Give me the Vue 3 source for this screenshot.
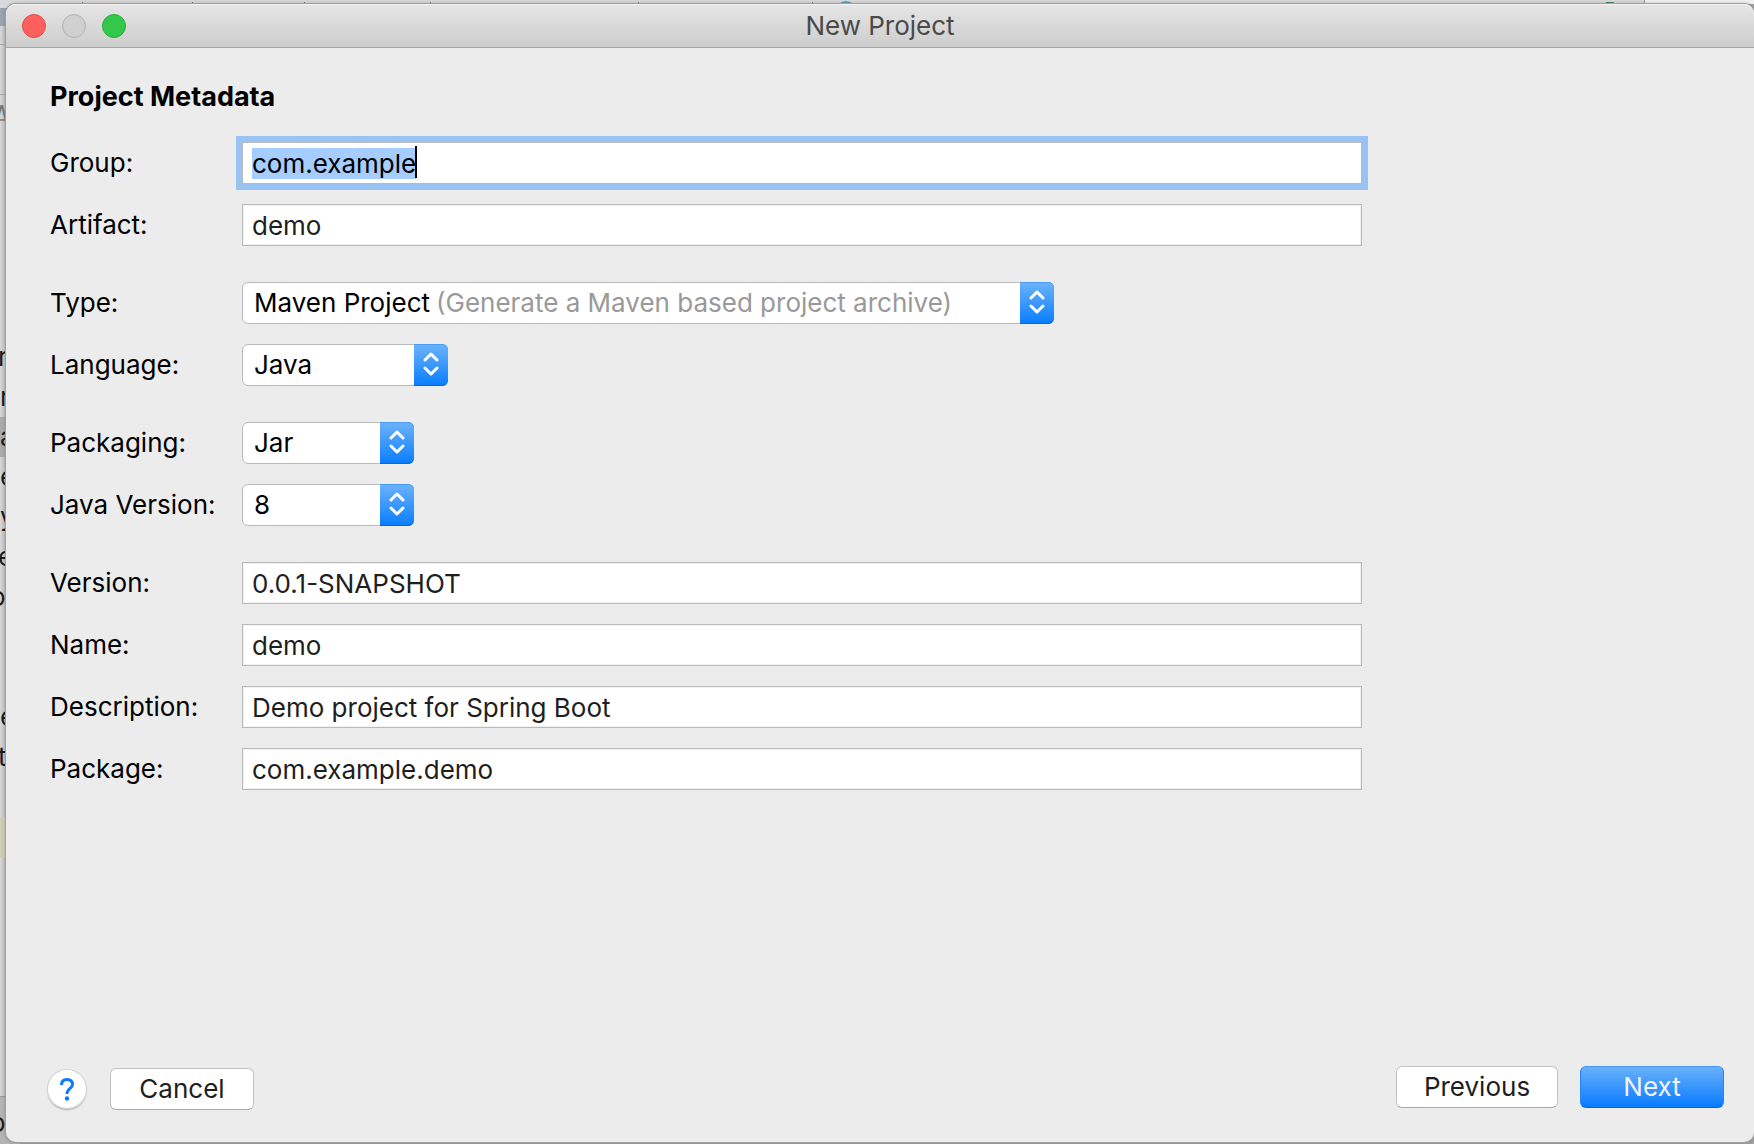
<script setup>
import { onMounted, reactive, ref } from 'vue'

const form = reactive({
  group: 'com.example',
  artifact: 'demo',
  type: 'Maven Project',
  language: 'Java',
  packaging: 'Jar',
  javaVersion: '8',
  version: '0.0.1-SNAPSHOT',
  name: 'demo',
  description: 'Demo project for Spring Boot',
  package: 'com.example.demo',
})

const sections = [
  [
    { key: 'group', label: 'Group:' },
    { key: 'artifact', label: 'Artifact:' },
  ],
  [
    { key: 'type', label: 'Type:', size: 'wide', hint: '(Generate a Maven based project archive)' },
    { key: 'language', label: 'Language:', size: 'medium' },
  ],
  [
    { key: 'packaging', label: 'Packaging:', size: 'small' },
    { key: 'javaVersion', label: 'Java Version:', size: 'small' },
  ],
  [
    { key: 'version', label: 'Version:' },
    { key: 'name', label: 'Name:' },
    { key: 'description', label: 'Description:' },
    { key: 'package', label: 'Package:' },
  ],
]

// Editor lines that show at the left edge of the dialog
const editorLines = ['r', 'r', 'a', 'e', 'y', 'e', 'o', '', '', 'e', 't', '', '']

const page = ref(null)
onMounted(() => {
  const first = page.value.querySelector('#group')
  first.focus()
  first.select()
})
</script>

<template>
  <div ref="page" class="desktop">
    <div class="editor" aria-hidden="true">
      <svg class="tabs" width="1754" height="4" viewBox="0 0 1754 4">
        <rect width="1754" height="4" fill="#dadada" />
        <path d="M82 2l2 2M192 2l2 2M304 2l2 2M430 2l2 2M638 2l2 2M812 2l2 2" stroke="#777" />
        <circle cx="846" cy="11" r="10" fill="#5ea3bd" />
        <rect x="1606" y="2" width="8" height="2" fill="#4a9160" />
        <rect x="1644" width="1" height="4" fill="#999" />
        <rect x="1645" width="109" height="4" fill="#f1f1f1" />
      </svg>
      <div class="edge">
        <div class="edge-nav"></div>
        <div class="edge-bar"></div>
        <div class="edge-tools"></div>
        <div class="edge-tab">w</div>
        <div class="edge-code">
          <div
            v-for="(line, i) in editorLines"
            :key="i"
            class="line"
            :class="{ selected: i === 2, current: i === 12, cut: i === 0 || i === 5 || i === 10, deep: i === 6 }"
          >{{ line }}</div>
        </div>
        <div class="edge-status">o</div>
      </div>
    </div>

    <main class="dialog">
      <header class="titlebar">
        <div class="lights">
          <button class="light close" type="button" aria-label="Close"></button>
          <button class="light minimize" type="button" aria-label="Minimize" disabled></button>
          <button class="light zoom" type="button" aria-label="Zoom"></button>
        </div>
        <h1>New Project</h1>
      </header>

      <form class="content" @submit.prevent>
        <h2>Project Metadata</h2>

        <div class="sections">
          <div v-for="(rows, s) in sections" :key="s" class="section">
            <div v-for="row in rows" :key="row.key" class="row">
              <label :for="row.key">{{ row.label }}</label>
              <div v-if="row.size" class="combo" :class="row.size">
                <select :id="row.key" v-model="form[row.key]">
                  <option>{{ form[row.key] }}</option>
                </select>
                <span v-if="row.hint" class="hint">{{ row.hint }}</span>
                <span class="arrows">
                  <svg width="16" height="24" viewBox="0 0 16 24" fill="none" stroke="#fff" stroke-width="3" stroke-linecap="round" stroke-linejoin="round">
                    <path d="M2 8l6-6 6 6M2 16l6 6 6-6" />
                  </svg>
                </span>
              </div>
              <div v-else class="field">
                <input :id="row.key" v-model="form[row.key]" type="text" spellcheck="false" autocomplete="off" />
                <span v-if="row.key === 'group'" class="caret"></span>
              </div>
            </div>
          </div>
        </div>

        <footer>
          <div class="left">
            <button class="help" type="button" aria-label="Help">
              <svg width="16" height="24" viewBox="0 0 16 24" fill="none">
                <path d="M2.500 8C2.500 4 4.500 2.500 8 2.500s5.500 2 5.500 5c0 4-5.500 4-5.500 9.500" stroke="#0a7aff" stroke-width="3" />
                <circle cx="8" cy="21.500" r="2.200" fill="#0a7aff" />
              </svg>
            </button>
            <button class="button" type="button">Cancel</button>
          </div>
          <div class="right">
            <button class="button previous" type="button">Previous</button>
            <button class="button primary" type="submit">Next</button>
          </div>
        </footer>
      </form>
    </main>
  </div>
</template>

<style>
body {
  margin: 0;
}
</style>

<style scoped>
* {
  box-sizing: border-box;
}

.desktop {
  position: relative;
  display: flex;
  min-height: 100vh;
  padding: 4px 0 2px 6px;
  overflow: hidden;
  background: #a2a2a2;
  font-family: Inter, "Liberation Sans", sans-serif;
  font-size: 26px;
  line-height: 32px;
  color: #000;
}

button,
input,
select {
  margin: 0;
  font: inherit;
}

/* Window behind the dialog */
.editor {
  position: absolute;
  inset: 0;
  overflow: hidden;
}

.tabs {
  display: block;
}

.edge {
  display: flex;
  flex-direction: column;
  width: 20px;
  height: calc(100% - 4px);
  background: linear-gradient(90deg, #d8d8d8, #bdbdbd 6px);
  color: #1c1c1c;
}

.edge-nav {
  height: 22px;
  border-top: 4px solid #dadada;
  background: #98a5ae;
}

.edge-bar {
  height: 19px;
  border-bottom: 1px solid #aaa;
}

.edge-tools {
  height: 50px;
  border-bottom: 1px solid #aaa;
}

.edge-tab {
  height: 26px;
  border-bottom: 2px solid #8c8c8c;
  color: #777;
  line-height: 32px;
  text-indent: -9px;
}

.edge-code {
  flex: 1;
  padding-top: 216px;
}

.line {
  height: 40px;
  line-height: 40px;
}

.line.cut {
  text-indent: -2px;
}

.line.deep {
  text-indent: -10px;
}

.line.selected {
  background: #aaa;
}

.line.current {
  background: #cfceb5;
}

.edge-status {
  height: 48px;
  border-top: 1px solid #999;
  background: #b4b4b4;
  line-height: 52px;
  text-indent: -10px;
}

/* Dialog */
.dialog {
  position: relative;
  display: flex;
  flex: 1;
  flex-direction: column;
  border-radius: 10px;
  background: #ececec;
  box-shadow: 0 0 0 1px #a0a0a0, 0 0 4px rgba(0, 0, 0, 0.3);
}

.titlebar {
  display: grid;
  grid-template-columns: 1fr auto 1fr;
  align-items: center;
  height: 44px;
  padding: 1px 16px 0;
  border-bottom: 1px solid #a6a6a6;
  border-radius: 10px 10px 0 0;
  background: linear-gradient(#e6e6e6, #cdcdcd);
  box-shadow: inset 0 1px #f4f4f4;
}

.lights {
  display: flex;
  gap: 16px;
}

.light {
  width: 24px;
  height: 24px;
  padding: 0;
  border: 1px solid;
  border-radius: 50%;
}

.close {
  border-color: #e24b47;
  background: #fc605c;
}

.minimize {
  border-color: #b2b2b2;
  background: #d0d0d0;
}

.zoom {
  border-color: #2bac38;
  background: #34c84a;
}

h1,
h2 {
  margin: 0;
  font-size: inherit;
}

h1 {
  color: #4a4a4a;
  font-weight: 400;
}

.content {
  display: flex;
  flex: 1;
  flex-direction: column;
  padding: 33px 30px 32px 44px;
}

h2 {
  font-size: 27px;
  font-weight: 700;
}

.sections {
  display: flex;
  flex-direction: column;
  gap: 36px;
  margin-top: 29px;
}

.section {
  display: flex;
  flex-direction: column;
  gap: 20px;
}

.row {
  display: grid;
  grid-template-columns: 192px 1fr;
  align-items: center;
}

.field {
  position: relative;
  margin-right: 362px;
}

.field input {
  display: block;
  width: 100%;
  height: 42px;
  padding: 0 9px;
  border: 1px solid #bababa;
  border-radius: 0;
  outline: none;
  background: #fff;
  box-shadow: inset 0 0 0 1px #f2f2f2;
  color: #1e1e1e;
  line-height: 32px;
}

.field input:focus {
  box-shadow: 0 0 0 6px #9ac3f5;
  color: #000;
}

.field input::selection {
  background: #a5cdff;
  color: #000;
}

.caret {
  position: absolute;
  top: 4px;
  left: 173px;
  width: 2px;
  height: 32px;
  background: #000;
}

.combo {
  position: relative;
  height: 42px;
}

.wide {
  width: 812px;
}

.medium {
  width: 206px;
}

.small {
  width: 172px;
}

.combo select {
  display: block;
  width: 100%;
  height: 42px;
  padding: 0 44px 0 11px;
  border: 1px solid #bababa;
  border-radius: 6px;
  appearance: none;
  background: #fff;
  color: #000;
}

.hint {
  position: absolute;
  top: 5px;
  left: 194px;
  color: #999;
  white-space: nowrap;
  pointer-events: none;
}

.arrows {
  position: absolute;
  top: 0;
  right: 0;
  display: flex;
  align-items: center;
  justify-content: center;
  width: 34px;
  height: 42px;
  padding: 0 1px 3px 0;
  border-radius: 0 6px 6px 0;
  background: linear-gradient(#6cb3fa, #087dff);
  box-shadow: inset 0 1px #4a9cf6, inset 0 -1px #0068f0;
  pointer-events: none;
}

footer {
  display: flex;
  justify-content: space-between;
  margin-top: auto;
}

.left,
.right {
  display: flex;
  align-items: center;
}

.left {
  gap: 24px;
  padding-top: 2px;
  margin-left: -2px;
}

.right {
  gap: 22px;
  padding-bottom: 2px;
}

.help {
  display: flex;
  align-items: center;
  justify-content: center;
  width: 38px;
  height: 38px;
  padding: 0;
  border: 0;
  border-radius: 50%;
  background: #fff;
  box-shadow: 0 0 0 1px #d2d2d2, 0 2px 2px #aaa;
}

.button {
  width: 144px;
  height: 42px;
  padding: 0;
  border: 1px solid #c2c2c2;
  border-bottom-color: #a8a8a8;
  border-radius: 6px;
  background: #fff;
  color: #1e1e1e;
}

.previous {
  width: 162px;
}

.primary {
  border-color: #4799f5 #2684f7 #0064ea;
  background: linear-gradient(#69b1fa, #087bff);
  color: #f2f2f7;
}
</style>
